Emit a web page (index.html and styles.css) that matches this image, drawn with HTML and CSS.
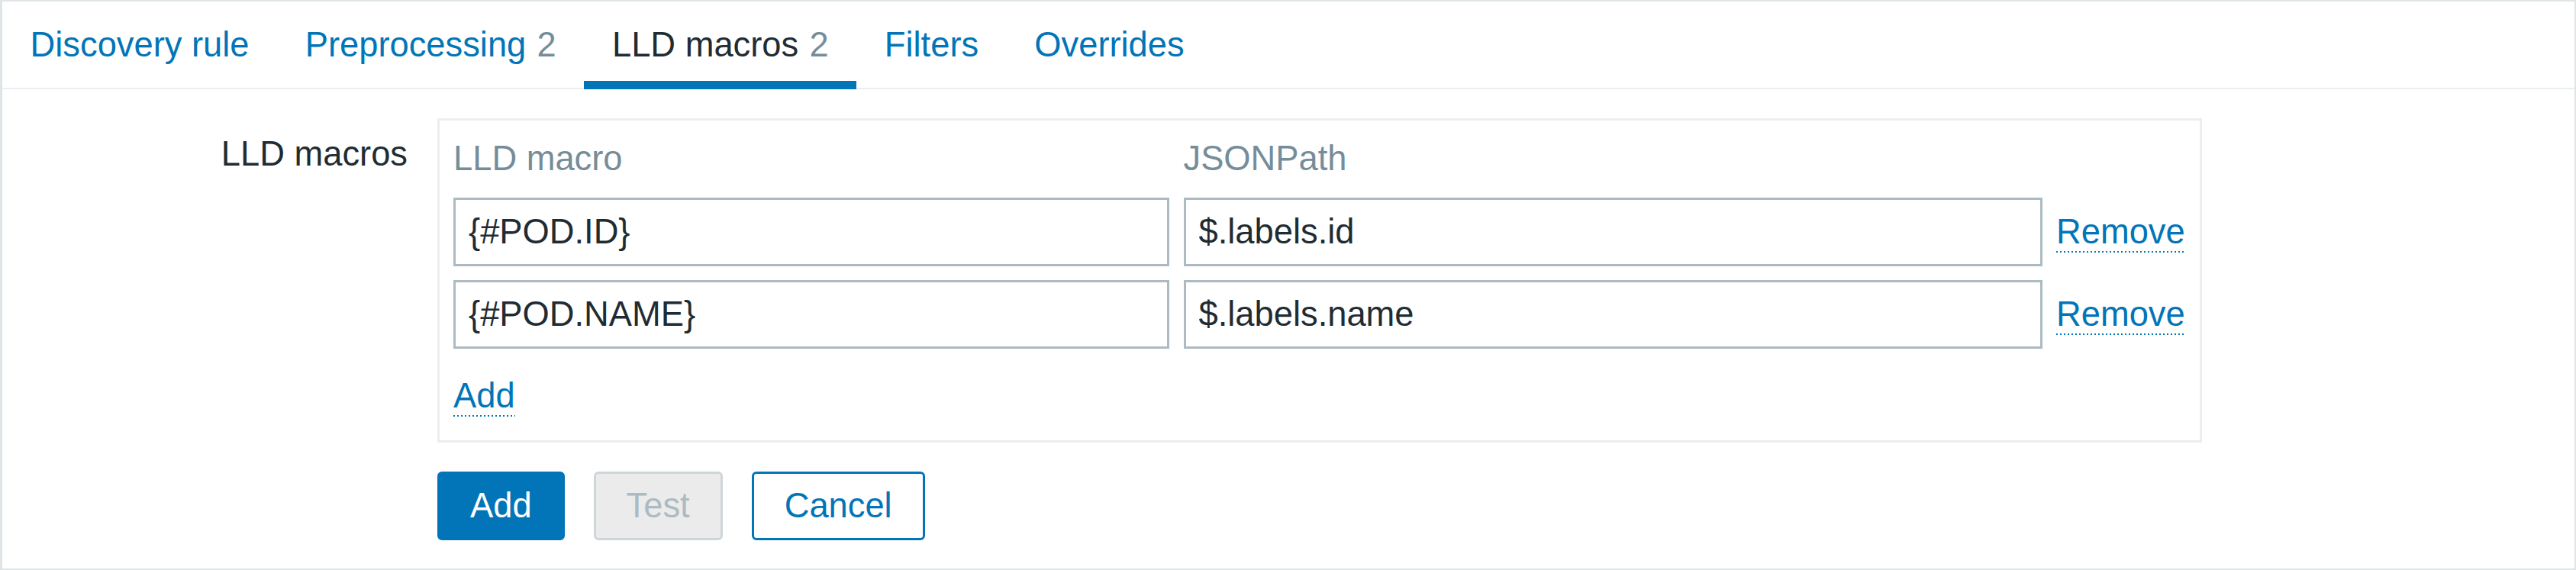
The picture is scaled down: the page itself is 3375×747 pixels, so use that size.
FILE: index.html
```html
<!DOCTYPE html>
<html lang="en">
<head>
<meta charset="utf-8">
<title>LLD macros</title>
<link rel="stylesheet" href="styles.css">
</head>
<body>
<div class="page">
  <ul class="tabs">
    <li class="tab"><a class="tab-link">Discovery rule</a></li>
    <li class="tab"><a class="tab-link">Preprocessing <span class="count">2</span></a></li>
    <li class="tab tab-active"><a class="tab-link">LLD macros <span class="count">2</span></a></li>
    <li class="tab"><a class="tab-link">Filters</a></li>
    <li class="tab"><a class="tab-link">Overrides</a></li>
  </ul>
  <form class="form">
    <div class="form-grid">
      <label class="form-label">LLD macros</label>
      <div class="form-field">
        <div class="macro-box">
          <div class="macro-table">
            <div class="th">LLD macro</div>
            <div class="th">JSONPath</div>
            <div class="th"></div>
            <input class="input input-macro" type="text" value="{#POD.ID}">
            <input class="input input-path" type="text" value="$.labels.id">
            <div class="cell-action"><a class="link">Remove</a></div>
            <input class="input input-macro" type="text" value="{#POD.NAME}">
            <input class="input input-path" type="text" value="$.labels.name">
            <div class="cell-action"><a class="link">Remove</a></div>
          </div>
          <div class="add-row"><a class="link">Add</a></div>
        </div>
      </div>
      <div class="form-spacer"></div>
      <div class="buttons">
        <button type="button" class="btn btn-primary">Add</button>
        <button type="button" class="btn btn-disabled" disabled>Test</button>
        <button type="button" class="btn btn-alt">Cancel</button>
      </div>
    </div>
  </form>
</div>
</body>
</html>
```
FILE: styles.css
```css
* {
  box-sizing: border-box;
}

html, body {
  margin: 0;
  padding: 0;
  background: #ffffff;
}

body {
  font-family: "Liberation Sans", Arial, sans-serif;
  font-size: 45.3px;
  color: #1f2c33;
}

.page {
  width: 3375px;
  height: 747px;
  border: 2px solid #dfe4e7;
  border-left-width: 3px;
  background: #ffffff;
}

/* Tabs */
.tabs {
  list-style: none;
  margin: 0;
  padding: 0;
  display: flex;
  border-bottom: 2px solid #ebeef0;
}

.tab {
  position: relative;
  height: 113px;
}

.tab-link {
  display: block;
  padding: 0 36.6px;
  line-height: 113px;
  color: #0275b8;
  white-space: nowrap;
  text-decoration: none;
}

.tab-active .tab-link {
  color: #1f2c33;
}

.tab-active::after {
  content: "";
  position: absolute;
  left: 0;
  right: 0;
  bottom: -2px;
  height: 11px;
  background: #0275b8;
}

.count {
  color: #768d99;
  margin-left: 1.7px;
}

/* Form */
.form {
  padding-top: 38px;
}

.form-grid {
  display: grid;
  grid-template-columns: 531px auto;
  column-gap: 39px;
  row-gap: 38px;
  justify-content: start;
}

.form-label {
  text-align: right;
  padding-top: 21px;
  line-height: 51px;
  white-space: nowrap;
}

.macro-box {
  display: inline-block;
  border: 3px solid #ebeef0;
  padding: 24px 19px 31px 18px;
}

.macro-table {
  display: grid;
  grid-template-columns: 938px 1125px auto;
  column-gap: 18.5px;
  row-gap: 18px;
  align-items: center;
}

.th {
  color: #768d99;
  line-height: 51px;
  margin-bottom: 8px;
  white-space: nowrap;
}

.input {
  font: inherit;
  color: #1f2c33;
  height: 90px;
  border: 3px solid #acbbc2;
  padding: 0 17px;
  background: #ffffff;
  outline: none;
  margin: 0;
  width: 100%;
}

.cell-action {
  line-height: 51px;
  white-space: nowrap;
}

.link {
  color: #0275b8;
  text-decoration: none;
  display: inline-block;
  line-height: 51px;
  padding-bottom: 2px;
  background-image: linear-gradient(to right, #0275b8 2px, transparent 2px);
  background-size: 5px 2px;
  background-repeat: repeat-x;
  background-position: left bottom;
}

.add-row {
  margin-top: 36px;
  line-height: 0;
}

/* Buttons */
.buttons {
  display: flex;
  gap: 38px;
}

.btn {
  font: inherit;
  height: 90px;
  padding: 0 40px;
  border: 3px solid #0275b8;
  border-radius: 6px;
  line-height: 84px;
  margin: 0;
  white-space: nowrap;
}

.btn-primary {
  background: #0275b8;
  color: #ffffff;
}

.btn-disabled {
  background: #ebebeb;
  border-color: #cfd6da;
  color: #acbbc2;
}

.btn-alt {
  background: #ffffff;
  color: #0275b8;
}
```
